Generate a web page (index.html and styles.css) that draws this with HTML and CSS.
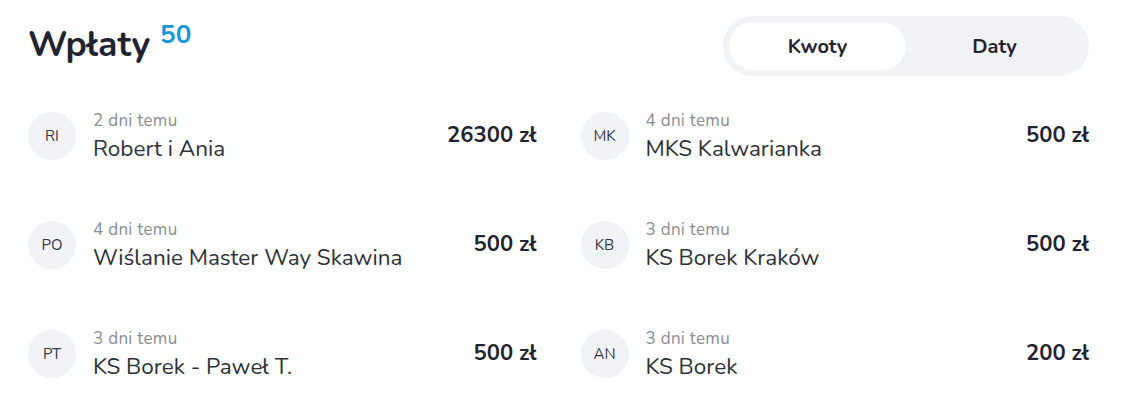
FILE: index.html
```html
<!DOCTYPE html>
<html lang="pl">
<head>
<meta charset="utf-8">
<title>Wpłaty</title>
<link rel="stylesheet" href="styles.css">
</head>
<body>
<div class="page">
  <header class="head">
    <h1 class="title">Wpłaty <sup class="count">50</sup></h1>
    <div class="toggle">
      <button class="tab active">Kwoty</button>
      <button class="tab">Daty</button>
    </div>
  </header>
  <ul class="list">
    <li class="item"><span class="avatar">RI</span><div class="info"><span class="date">2 dni temu</span><span class="name">Robert i Ania</span></div><span class="amount">26300 zł</span></li>
    <li class="item"><span class="avatar">MK</span><div class="info"><span class="date">4 dni temu</span><span class="name">MKS Kalwarianka</span></div><span class="amount">500 zł</span></li>
    <li class="item"><span class="avatar">PO</span><div class="info"><span class="date">4 dni temu</span><span class="name">Wiślanie Master Way Skawina</span></div><span class="amount">500 zł</span></li>
    <li class="item"><span class="avatar">KB</span><div class="info"><span class="date">3 dni temu</span><span class="name">KS Borek Kraków</span></div><span class="amount">500 zł</span></li>
    <li class="item"><span class="avatar">PT</span><div class="info"><span class="date">3 dni temu</span><span class="name">KS Borek - Paweł T.</span></div><span class="amount">500 zł</span></li>
    <li class="item"><span class="avatar">AN</span><div class="info"><span class="date">3 dni temu</span><span class="name">KS Borek</span></div><span class="amount">200 zł</span></li>
  </ul>
</div>
</body>
</html>
```

FILE: styles.css
```css
* { box-sizing: border-box; }
html, body { margin: 0; padding: 0; background: #fff; }
body {
  font-family: "Nunito", "Lato", "Noto Sans", sans-serif;
  color: #1f2430;
}
.page {
  padding: 16px 36px 0 28px;
}
.head {
  display: flex;
  justify-content: space-between;
  align-items: flex-start;
}
.title {
  margin: 0;
  padding-top: 11px;
  font-size: 35.5px;
  font-weight: 700;
  line-height: 1;
  color: #1f2430;
  display: flex;
  align-items: flex-start;
}
.count {
  font-size: 26px;
  font-weight: 700;
  color: #1a98d5;
  margin-left: 10px;
  margin-top: -5px;
  line-height: 1;
}
.toggle {
  display: flex;
  width: 366px;
  height: 60px;
  padding: 6px;
  background: #f2f3f7;
  border-radius: 30px;
}
.tab {
  flex: 1;
  border: 0;
  background: transparent;
  font-family: inherit;
  font-size: 20px;
  font-weight: 700;
  color: #1f2430;
  border-radius: 24px;
  padding: 0;
  cursor: pointer;
}
.tab.active { background: #fff; }
.list {
  list-style: none;
  margin: 36px 0 0;
  padding: 0;
  display: grid;
  grid-template-columns: 1fr 1fr;
  column-gap: 44px;
  row-gap: 61px;
}
.item {
  display: flex;
  align-items: center;
  height: 48px;
}
.avatar {
  width: 48px;
  height: 48px;
  flex: none;
  border-radius: 50%;
  background: #f2f3f7;
  display: flex;
  align-items: center;
  justify-content: center;
  font-size: 15px;
  color: #333844;
}
.info {
  flex: 1;
  display: flex;
  flex-direction: column;
  margin-left: 17px;
  padding-top: 3px;
}
.date {
  font-size: 17px;
  letter-spacing: 0.3px;
  color: #8a8d94;
  line-height: 20px;
}
.name {
  font-size: 22.5px;
  color: #2d313a;
  line-height: 30px;
  margin-top: 3px;
  white-space: nowrap;
}
.amount {
  font-size: 22px;
  font-weight: 700;
  color: #1f2430;
  align-self: flex-start;
  margin-top: 8px;
}
```
